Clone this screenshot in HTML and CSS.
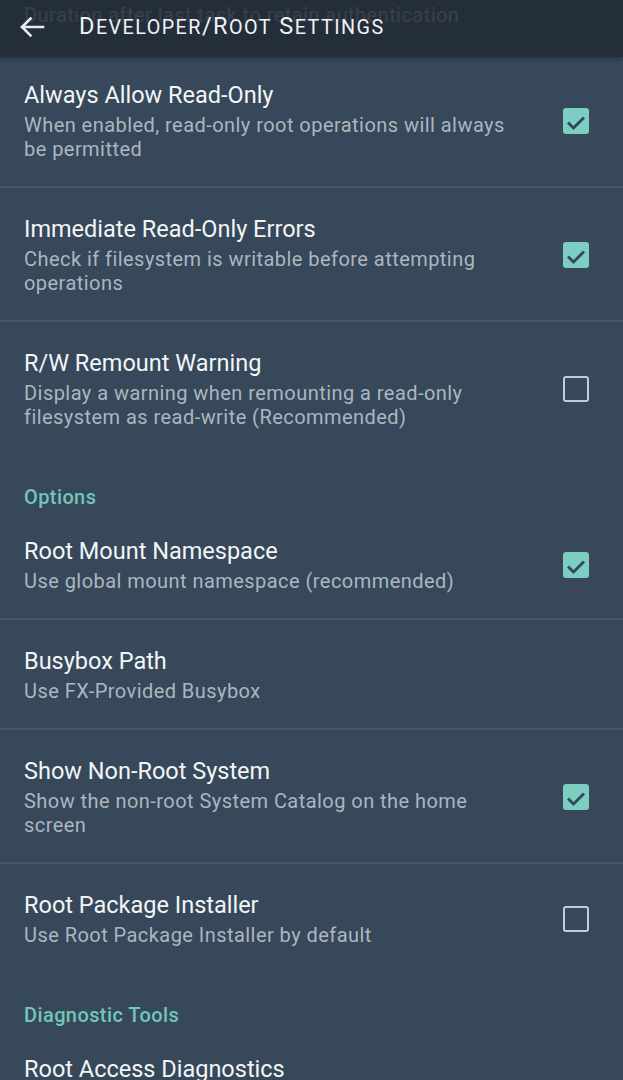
FILE: index.html
```html
<!DOCTYPE html>
<html lang="en">
<head>
    <meta charset="UTF-8">
    <meta name="viewport" content="width=device-width, initial-scale=1.0">
    <title>Developer/Root Settings</title>
    <link rel="stylesheet" href="styles.css">
</head>
<body>
    <div class="screen">
        <header class="appbar">
            <svg class="back" viewBox="0 0 26 24" width="26" height="24">
                <path d="M24 12H3M11.5 3.5L3 12l8.5 8.5" fill="none" stroke="#e9ecee" stroke-width="2.6" stroke-linecap="square"/>
            </svg>
            <h1 class="title">D<span class="sc">eveloper</span>/R<span class="sc">oot</span> S<span class="sc">ettings</span></h1>
        </header>

        <div class="content">
            <section class="group">
                <div class="item partial">
                    <div class="text">
                        <p class="summary">Duration after last task to retain authentication</p>
                    </div>
                </div>
                <div class="item">
                    <div class="text">
                        <p class="name">Always Allow Read-Only</p>
                        <p class="summary">When enabled, read-only root operations will always be permitted</p>
                    </div>
                    <i class="check on"><svg viewBox="0 0 26 26"><path d="M5 14.5l5.5 5.5L21 9.5"/></svg></i>
                </div>
                <div class="item">
                    <div class="text">
                        <p class="name">Immediate Read-Only Errors</p>
                        <p class="summary">Check if filesystem is writable before attempting operations</p>
                    </div>
                    <i class="check on"><svg viewBox="0 0 26 26"><path d="M5 14.5l5.5 5.5L21 9.5"/></svg></i>
                </div>
                <div class="item">
                    <div class="text">
                        <p class="name">R/W Remount Warning</p>
                        <p class="summary">Display a warning when remounting a read-only filesystem as read-write (Recommended)</p>
                    </div>
                    <i class="check"></i>
                </div>
            </section>

            <section class="group">
                <h2 class="group-title">Options</h2>
                <div class="item">
                    <div class="text">
                        <p class="name">Root Mount Namespace</p>
                        <p class="summary">Use global mount namespace (recommended)</p>
                    </div>
                    <i class="check on"><svg viewBox="0 0 26 26"><path d="M5 14.5l5.5 5.5L21 9.5"/></svg></i>
                </div>
                <div class="item">
                    <div class="text">
                        <p class="name">Busybox Path</p>
                        <p class="summary">Use FX-Provided Busybox</p>
                    </div>
                </div>
                <div class="item">
                    <div class="text">
                        <p class="name">Show Non-Root System</p>
                        <p class="summary">Show the non-root System Catalog on the home screen</p>
                    </div>
                    <i class="check on"><svg viewBox="0 0 26 26"><path d="M5 14.5l5.5 5.5L21 9.5"/></svg></i>
                </div>
                <div class="item">
                    <div class="text">
                        <p class="name">Root Package Installer</p>
                        <p class="summary">Use Root Package Installer by default</p>
                    </div>
                    <i class="check"></i>
                </div>
            </section>

            <section class="group">
                <h2 class="group-title">Diagnostic Tools</h2>
                <div class="item">
                    <div class="text">
                        <p class="name">Root Access Diagnostics</p>
                    </div>
                </div>
            </section>
        </div>
    </div>
</body>
</html>
```

FILE: styles.css
```css
* {
    box-sizing: border-box;
}

body {
    margin: 0;
    background: #36485a;
    font-family: Roboto, "Noto Sans", sans-serif;
}

.screen {
    position: relative;
    width: 623px;
    height: 1080px;
    overflow: hidden;
    background: #36485a;
}

/* toolbar sits over the scrolled list */
.appbar {
    position: absolute;
    top: 0;
    left: 0;
    right: 0;
    z-index: 2;
    height: 57px;
    display: flex;
    align-items: center;
    padding: 0 0 5px 19px;
    background: rgba(33, 42, 54, 0.84);
    box-shadow: 0 2px 4px rgba(0, 0, 0, 0.28);
}

.back {
    display: block;
    margin-top: 2px;
}

.title {
    margin: 0 0 0 34px;
    color: #f1f3f4;
    font-size: 23.5px;
    font-weight: 400;
    letter-spacing: 1.45px;
}

.title .sc {
    text-transform: uppercase;
    font-size: 0.84em;
}

.group-title {
    margin: 0;
    padding: 30px 24px 0;
    line-height: 26px;
    color: #72c6b9;
    font-size: 20px;
    font-weight: 500;
    letter-spacing: 0.4px;
}

.item {
    display: flex;
    align-items: center;
    padding: 27px 34px 25px 24px;
    border-bottom: 2px solid #45576a;
}

.item:last-child {
    border-bottom: none;
}

.item.partial {
    padding-top: 3px;
}

.item .text {
    flex: 1;
    max-width: 492px;
}

.item p {
    margin: 0;
}

.item .name {
    color: #f3f5f6;
    font-size: 23.5px;
    line-height: 28px;
}

.item .summary {
    margin-top: 4px;
    color: #adb6bf;
    font-size: 20px;
    line-height: 24px;
    letter-spacing: 0.45px;
}

.item.partial .summary {
    margin-top: 0;
}

.check {
    display: block;
    width: 26px;
    height: 26px;
    margin-left: auto;
    border: 2.6px solid #c6cbd0;
    border-radius: 3px;
}

.check.on {
    border: none;
    background: #7ecdc1;
}

.check svg {
    display: block;
    width: 26px;
    height: 26px;
}

.check path {
    fill: none;
    stroke: #33475a;
    stroke-width: 2.8;
}
```
